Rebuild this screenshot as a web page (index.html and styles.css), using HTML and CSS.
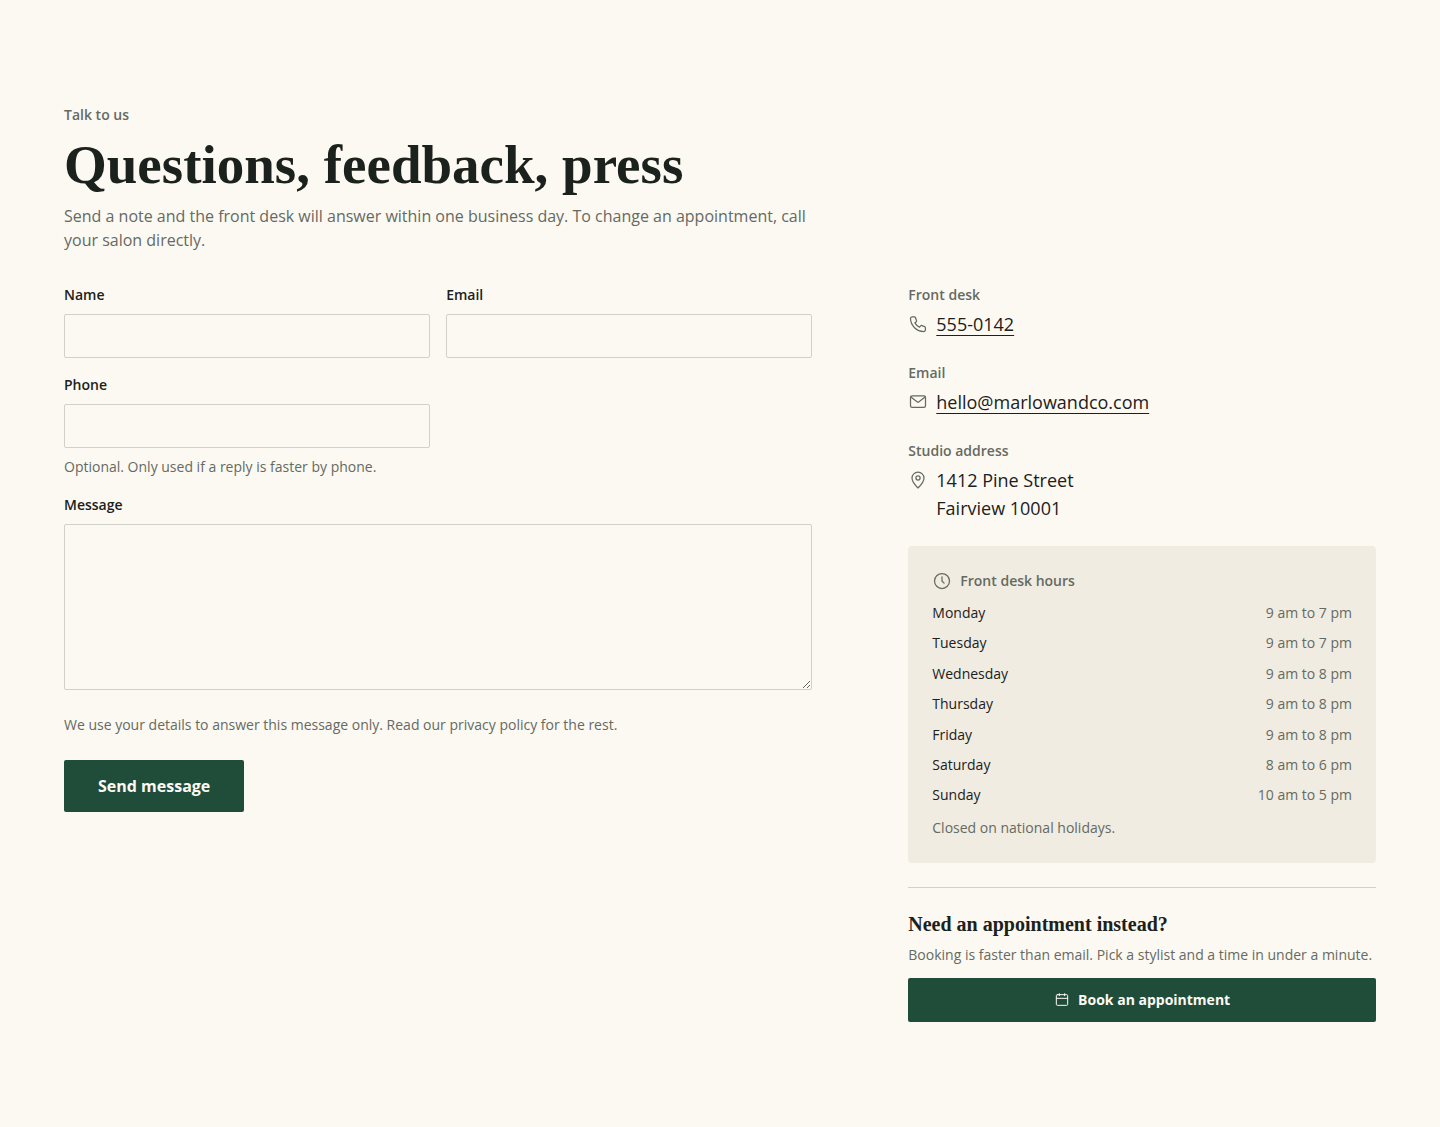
FILE: index.html
```html
<!DOCTYPE html>
<html lang="en">
<head>
    <meta charset="UTF-8">
    <meta name="viewport" content="width=device-width, initial-scale=1.0">
    <title>Contact - Marlow and Co</title>
    <link rel="stylesheet" href="styles.css">
</head>
<body>
<main class="contact">
    <header class="intro">
        <p class="eyebrow">Talk to us</p>
        <h1>Questions, feedback, press</h1>
        <p class="lead">Send a note and the front desk will answer within one business day. To change an appointment, call your salon directly.</p>
    </header>

    <div class="columns">
        <!-- Contact form -->
        <form class="contact-form">
            <div class="fields">
                <div class="field">
                    <label for="name">Name</label>
                    <input type="text" id="name" name="name" autocomplete="name">
                </div>
                <div class="field">
                    <label for="email">Email</label>
                    <input type="email" id="email" name="email" autocomplete="email">
                </div>
                <div class="field">
                    <label for="phone">Phone</label>
                    <input type="tel" id="phone" name="phone" autocomplete="tel" aria-describedby="phone-hint">
                    <p class="hint" id="phone-hint">Optional. Only used if a reply is faster by phone.</p>
                </div>
                <div class="field field-wide">
                    <label for="message">Message</label>
                    <textarea id="message" name="message"></textarea>
                </div>
            </div>
            <p class="hint">We use your details to answer this message only. Read our privacy policy for the rest.</p>
            <button type="submit" class="btn btn-large">Send message</button>
        </form>

        <!-- Details -->
        <aside class="details">
            <section class="detail">
                <h2 class="eyebrow">Front desk</h2>
                <div class="detail-value">
                    <svg class="icon" viewBox="0 0 24 24" aria-hidden="true"><path d="M5 3.500h2.600a1.500 1.500 0 0 1 1.400 1l1.200 3.300a1.500 1.500 0 0 1-.5 1.700L8.300 10.600a13 13 0 0 0 5.600 5.300l1.100-1.500a1.500 1.500 0 0 1 1.700-.5l3.200 1.200a1.500 1.500 0 0 1 1 1.400V19a2 2 0 0 1-2 2A16 16 0 0 1 3 5.500a2 2 0 0 1 2-2z"/></svg>
                    <a href="tel:5550142">555-0142</a>
                </div>
            </section>
            <section class="detail">
                <h2 class="eyebrow">Email</h2>
                <div class="detail-value">
                    <svg class="icon" viewBox="0 0 24 24" aria-hidden="true"><rect x="3" y="4.500" width="18" height="14" rx="2"/><path d="M3.500 6l7.300 5.600a2 2 0 0 0 2.400 0L20.500 6"/></svg>
                    <a href="mailto:hello@marlowandco.com">hello@marlowandco.com</a>
                </div>
            </section>
            <section class="detail">
                <h2 class="eyebrow">Studio address</h2>
                <div class="detail-value">
                    <svg class="icon" viewBox="0 0 24 24" aria-hidden="true"><circle cx="12" cy="9.500" r="2.500"/><path d="M12 21.500c-3.800-3.500-7.200-7.600-7.200-11.800a7.200 7.200 0 0 1 14.400 0c0 4.200-3.400 8.300-7.200 11.800z"/></svg>
                    <address>1412 Pine Street<br>Fairview 10001</address>
                </div>
            </section>

            <section class="hours">
                <h2 class="eyebrow hours-title">
                    <svg class="icon" viewBox="0 0 24 24" aria-hidden="true"><circle cx="12" cy="12" r="9"/><path d="M12 7v5l2.500 2.500"/></svg>
                    Front desk hours
                </h2>
                <dl class="hours-list">
                    <div><dt>Monday</dt><dd>9 am to 7 pm</dd></div>
                    <div><dt>Tuesday</dt><dd>9 am to 7 pm</dd></div>
                    <div><dt>Wednesday</dt><dd>9 am to 8 pm</dd></div>
                    <div><dt>Thursday</dt><dd>9 am to 8 pm</dd></div>
                    <div><dt>Friday</dt><dd>9 am to 8 pm</dd></div>
                    <div><dt>Saturday</dt><dd>8 am to 6 pm</dd></div>
                    <div><dt>Sunday</dt><dd>10 am to 5 pm</dd></div>
                </dl>
                <p class="hint">Closed on national holidays.</p>
            </section>

            <section class="booking">
                <h2>Need an appointment instead?</h2>
                <p class="hint">Booking is faster than email. Pick a stylist and a time in under a minute.</p>
                <a class="btn" href="#book">
                    <svg class="icon icon-small" viewBox="0 0 24 24" aria-hidden="true"><rect x="3.500" y="4" width="17" height="16" rx="1.500"/><path d="M8 2.500v3M16 2.500v3M3.500 9.500h17"/></svg>
                    Book an appointment
                </a>
            </section>
        </aside>
    </div>
</main>
</body>
</html>
```
FILE: styles.css
```css
:root {
    --bg: #fcf9f2;
    --panel: #f0ece1;
    --ink: #1b211c;
    --muted: #656a62;
    --line: #d2d0ca;
    --green: #1f4d3a;
    --sans: "Open Sans", sans-serif;
    --serif: "Liberation Serif", serif;
}

* {
    box-sizing: border-box;
}

body,
h1,
h2,
p,
dl,
dd {
    margin: 0;
}

body {
    background: var(--bg);
    color: var(--ink);
    font: 14px/22px var(--sans);
}

.contact {
    display: grid;
    gap: 32px;
    padding: 104px 64px;
}

/* Intro */
.intro {
    max-width: 748px;
}

.eyebrow {
    color: var(--muted);
    font-size: 14px;
    font-weight: 600;
}

h1 {
    margin: 10px 0;
    font: bold 55px/58px var(--serif);
}

.lead {
    color: var(--muted);
    font-size: 16px;
    line-height: 24px;
}

.columns {
    display: grid;
    grid-template-columns: 8fr 5fr;
    gap: 96px;
    align-items: start;
}

/* Form */
.contact-form {
    display: grid;
    gap: 24px;
    justify-items: start;
}

.fields {
    display: grid;
    grid-template-columns: 1fr 1fr;
    gap: 16px;
    width: 100%;
}

.field {
    display: grid;
    gap: 8px;
    align-content: start;
}

.field-wide {
    grid-column: 1 / -1;
}

label {
    font-weight: 600;
}

input,
textarea {
    display: block;
    width: 100%;
    padding: 8px 12px;
    border: 1px solid var(--line);
    border-radius: 2px;
    background: transparent;
    color: inherit;
    font: 16px/24px var(--sans);
}

input {
    height: 44px;
}

textarea {
    height: 166px;
    resize: vertical;
}

.hint {
    color: var(--muted);
}

.btn {
    display: flex;
    align-items: center;
    justify-content: center;
    gap: 8px;
    min-height: 44px;
    padding: 0 24px;
    border: 0;
    border-radius: 2px;
    background: var(--green);
    color: var(--bg);
    font: bold 14px/22px var(--sans);
    text-decoration: none;
    cursor: pointer;
}

.btn-large {
    min-height: 52px;
    padding: 0 34px;
    font-size: 16px;
}

/* Details column */
.details {
    display: grid;
    gap: 24px;
}

.detail {
    display: grid;
    gap: 4px;
}

.detail-value {
    display: flex;
    gap: 8px;
    font-size: 18px;
    line-height: 28px;
}

.detail-value .icon {
    margin-top: 4px;
}

.detail-value a {
    color: inherit;
    text-decoration-thickness: 1px;
    text-underline-offset: 4px;
}

address {
    font-style: normal;
}

.icon {
    flex: none;
    width: 20px;
    height: 20px;
    fill: none;
    stroke: var(--muted);
    stroke-width: 1.5;
    stroke-linecap: round;
    stroke-linejoin: round;
}

.icon-small {
    width: 16px;
    height: 16px;
    stroke: currentColor;
}

.hours {
    display: grid;
    gap: 10px;
    padding: 24px;
    border-radius: 4px;
    background: var(--panel);
}

.hours-title {
    display: flex;
    align-items: center;
    gap: 8px;
}

.hours-list {
    display: grid;
    gap: 8px;
    line-height: 1.6;
}

.hours-list div {
    display: flex;
    justify-content: space-between;
}

.hours-list dd {
    color: var(--muted);
}

.booking {
    display: grid;
    gap: 8px;
    padding-top: 24px;
    border-top: 1px solid var(--line);
}

.booking h2 {
    font: bold 20px/24px var(--serif);
}

.booking .btn {
    margin-top: 4px;
}
```
